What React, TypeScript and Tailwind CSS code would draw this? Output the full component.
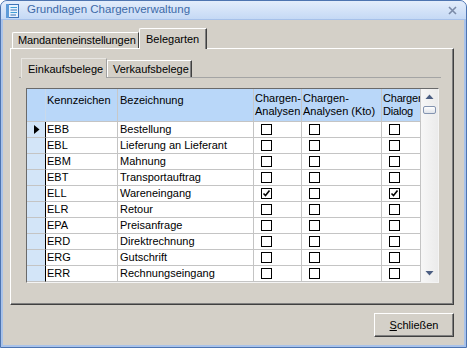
import React from "react";

type Row = { code: string; name: string; a: boolean; kto: boolean; dlg: boolean };

const rows: Row[] = [
  { code: "EBB", name: "Bestellung", a: false, kto: false, dlg: false },
  { code: "EBL", name: "Lieferung an Lieferant", a: false, kto: false, dlg: false },
  { code: "EBM", name: "Mahnung", a: false, kto: false, dlg: false },
  { code: "EBT", name: "Transportauftrag", a: false, kto: false, dlg: false },
  { code: "ELL", name: "Wareneingang", a: true, kto: false, dlg: true },
  { code: "ELR", name: "Retour", a: false, kto: false, dlg: false },
  { code: "EPA", name: "Preisanfrage", a: false, kto: false, dlg: false },
  { code: "ERD", name: "Direktrechnung", a: false, kto: false, dlg: false },
  { code: "ERG", name: "Gutschrift", a: false, kto: false, dlg: false },
  { code: "ERR", name: "Rechnungseingang", a: false, kto: false, dlg: false },
];

const Check: React.FC<{ on: boolean }> = ({ on }) => (
  <div className="ml-[7px] mt-[2px] w-[11px] h-[11px] border border-black bg-white">
    {on && (
      <svg width="9" height="9" viewBox="0 0 9 9">
        <path d="M1.5 4.5 L3.5 6.5 L7.5 1.5" stroke="#000" strokeWidth="1.6" fill="none" />
      </svg>
    )}
  </div>
);

const AppIcon = () => (
  <svg width="15" height="16" viewBox="0 0 15 16">
    <rect x="3" y="1.5" width="10.5" height="13" fill="#e8f2fc" stroke="#3f74b8" />
    <rect x="1" y="1" width="3" height="14" fill="#5d9ad8" />
    <line x1="5.5" y1="4.5" x2="12" y2="4.5" stroke="#3f9fd8" />
    <line x1="5.5" y1="7" x2="12" y2="7" stroke="#3f74b8" />
    <line x1="5.5" y1="9.5" x2="12" y2="9.5" stroke="#3f9fd8" />
    <line x1="5.5" y1="12" x2="11" y2="12" stroke="#3f74b8" />
  </svg>
);

export default function App() {
  return (
    <div className="w-[467px] h-[348px] flex flex-col bg-[#a8c2ea] border border-[#4d74b0] rounded-t-[7px] overflow-hidden font-['Liberation_Sans',Arial,sans-serif] text-[11px] text-black">
      {/* Titelleiste */}
      <div className="h-[19px] flex items-center bg-gradient-to-b from-[#e3edfb] to-[#c5d9f5] border-b border-[#a7c1e9]">
        <div className="ml-[4px] mt-[1px]">
          <AppIcon />
        </div>
        <span className="ml-[7px] text-[11.5px] text-[#3d6aa8]">Grundlagen Chargenverwaltung</span>
        <svg className="ml-auto mr-[9px]" width="9" height="9" viewBox="0 0 9 9">
          <path d="M1 1 L8 8 M8 1 L1 8" stroke="#7b8ba8" strokeWidth="1.6" />
        </svg>
      </div>

      {/* Fensterinhalt */}
      <div className="flex-1 mx-[2px] mb-[2px] bg-[#d4d0c8] pt-[8px] pl-[7px]">
        {/* äußere Tabs */}
        <div className="flex items-start h-[21px]">
          <div className="ml-[2px] mt-[4px] h-[16px] w-[127px] pl-[5px] leading-[15px] tracking-[-0.1px] border-t border-l border-white border-r border-r-[#404040] rounded-tl-[2px]">
            Mandanteneinstellungen
          </div>
          <div className="relative z-10 h-[21px] w-[68px] pl-[6px] pt-[2px] bg-[#d4d0c8] border-t border-l border-white border-r border-r-[#404040] shadow-[inset_-1px_0_0_#808080] rounded-tl-[2px]">
            Belegarten
          </div>
        </div>

        <div className="-mt-px w-[444px] h-[257px] border-t border-l border-white border-r border-b border-r-[#404040] border-b-[#404040] shadow-[inset_-1px_-1px_0_#808080]">
          {/* innere Tabs */}
          <div className="flex items-start h-[20px] mt-[9px] ml-[10px]">
            <div className="relative z-10 h-[20px] w-[86px] pl-[6px] pt-[2px] bg-[#d4d0c8] border-t border-l border-[#e8e6e2] border-r border-r-[#a0a0a0]">
              Einkaufsbelege
            </div>
            <div className="mt-[2px] h-[17px] w-[85px] pl-[5px] leading-[16px] border-t border-l border-white border-r border-r-[#404040] shadow-[inset_-1px_0_0_#808080]">
              Verkaufsbelege
            </div>
          </div>

          <div className="-mt-px ml-[8px] w-[422px] border-t border-[#a4a4a4] pt-[10px]">
            {/* Tabelle */}
            <div className="ml-[7px] w-[413px] h-[195px] flex border-t border-l border-[#6a6a6a] border-r border-b border-r-[#f4f4f4] border-b-[#f4f4f4] bg-white">
              <div className="w-[394px] flex flex-col">
                <div className="h-[33px] flex bg-[#b9d7f9] border-b border-[#c4c4c4]">
                  <div className="w-[19px] border-r border-[#c9d9ea]" />
                  <div className="w-[72px] pl-[1px] pt-[3px] border-r border-[#c8c8c8]">Kennzeichen</div>
                  <div className="w-[136px] pl-[2px] pt-[3px] border-r border-[#c8c8c8]">Bezeichnung</div>
                  <div className="w-[48px] pl-[1px] pt-[3px] leading-[13px] border-r border-[#c8c8c8] overflow-hidden whitespace-nowrap">
                    Chargen-<br />Analysen
                  </div>
                  <div className="w-[80px] pl-[1px] pt-[3px] leading-[13px] border-r border-[#c8c8c8] overflow-hidden whitespace-nowrap">
                    Chargen-<br />Analysen (Kto)
                  </div>
                  <div className="w-[39px] pl-[1px] pt-[3px] leading-[13px] tracking-[-0.2px] border-r border-[#c8c8c8] overflow-hidden whitespace-nowrap">
                    Chargen-<br />Dialog
                  </div>
                </div>
                {rows.map((r, i) => (
                  <div key={r.code} className="h-[16px] flex">
                    <div className="w-[19px] bg-[#d3e5f8] border-b border-[#c4c4c4] border-r border-r-black flex items-center pl-[7px]">
                      {i === 0 && (
                        <svg width="6" height="9" viewBox="0 0 6 9">
                          <path d="M0 0 L5.5 4.5 L0 9 Z" fill="#000" />
                        </svg>
                      )}
                    </div>
                    <div className="w-[72px] pl-[1px] leading-[15px] border-b border-r border-[#c4c4c4]">{r.code}</div>
                    <div className="w-[136px] pl-[2px] leading-[15px] border-b border-r border-[#c4c4c4]">{r.name}</div>
                    <div className="w-[48px] border-b border-r border-[#c4c4c4]">
                      <Check on={r.a} />
                    </div>
                    <div className="w-[80px] border-b border-r border-[#c4c4c4]">
                      <Check on={r.kto} />
                    </div>
                    <div className="w-[39px] border-b border-r border-[#c4c4c4]">
                      <Check on={r.dlg} />
                    </div>
                  </div>
                ))}
              </div>

              {/* Scrollleiste */}
              <div className="w-[17px] flex flex-col items-center bg-gradient-to-r from-[#f7f7f7] to-[#ebebeb]">
                <svg className="mt-[5px]" width="9" height="5" viewBox="0 0 9 5">
                  <path d="M0.5 5 L4.5 0.5 L8.5 5 Z" fill="#4b5e82" />
                </svg>
                <div className="mt-[7px] w-[13px] h-[8px] rounded-[2px] border border-[#8494b0] bg-gradient-to-b from-white to-[#dfe3ea]" />
                <svg className="mt-auto mb-[6px]" width="9" height="5" viewBox="0 0 9 5">
                  <path d="M0.5 0 L8.5 0 L4.5 4.5 Z" fill="#4b5e82" />
                </svg>
              </div>
            </div>
          </div>
        </div>

        {/* Schaltfläche */}
        <div className="w-[444px] flex justify-end mt-[8px]">
          <button className="w-[80px] h-[24px] bg-[#d4d0c8] border-t border-l border-white border-r border-b border-r-[#404040] border-b-[#404040] shadow-[inset_-1px_-1px_0_#808080] text-[11px] text-black">
            <span className="underline">S</span>chließen
          </button>
        </div>
      </div>
    </div>
  );
}
